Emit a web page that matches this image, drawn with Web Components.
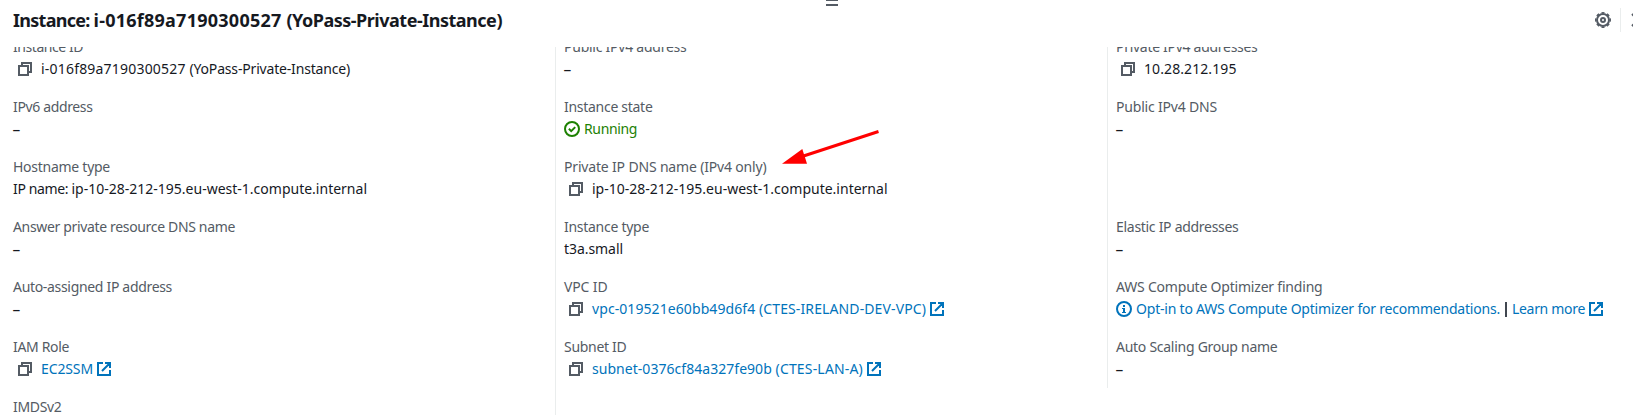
<!DOCTYPE html>
<html lang="en">
<head>
<meta charset="utf-8">
<title>Instance details</title>
<style>
html,body{margin:0;height:415px;overflow:hidden;background:#fff}
body{font:14px/22px "Noto Sans","Open Sans",sans-serif;color:#16191f}
</style>
</head>
<body>
<instance-panel></instance-panel>
<script>
const define = (name, html, ready) => customElements.define(name, class extends HTMLElement {
  connectedCallback() {
    if (this.shadowRoot) return;
    this.attachShadow({ mode: 'open' }).innerHTML = html;
    if (ready) ready(this, this.shadowRoot);
  }
});

const icons = {
  copy: '<path d="M2 5h9v9H2zM5 5V2h9v9h-3" fill="none" stroke="currentColor" stroke-width="2"/>',
  external: '<path d="M7 2H2v12h12V9M9 2h5v5M14 2L6 10" fill="none" stroke="currentColor" stroke-width="2"/>',
  ok: '<circle cx="8" cy="8" r="7" fill="none" stroke="currentColor" stroke-width="2"/><path d="M4.9 7.8l2.3 2.3 4-4" fill="none" stroke="currentColor" stroke-width="2"/>',
  info: '<circle cx="8" cy="8" r="7" fill="none" stroke="currentColor" stroke-width="2"/><path d="M7 4h2v2H7zM6 7h3v4h1v1H6v-1h1V8H6z" fill="currentColor"/>',
  gear: '<g fill="none" stroke="currentColor"><circle cx="8" cy="8" r="6" stroke-width="2"/><circle cx="8" cy="8" r="7.300" stroke-width="1.400" pathLength="80" stroke-dasharray="5.500 4.500" stroke-dashoffset="2.750"/><circle cx="8" cy="8" r="2" stroke-width="2"/></g>',
  close: '<path d="M2 2l12 12M14 2L2 14" fill="none" stroke="currentColor" stroke-width="2"/>'
};

define('ui-icon', '<style>:host{display:block;flex:none;width:16px;height:16px}svg{display:block}</style><svg width="16" height="16" viewBox="0 0 16 16"></svg>',
  (el, root) => { root.querySelector('svg').innerHTML = icons[el.getAttribute('name')]; });

/* One line of text tracked to a given measure. */
define('fit-text', '<style>:host{display:block;flex:none;white-space:pre;width:max-content}</style><span><slot></slot></span>',
  (el, root) => {
    const w = +el.getAttribute('w');
    if (!w) return;
    const span = root.querySelector('span');
    const gap = (w - span.getBoundingClientRect().width) / el.textContent.length;
    span.style.letterSpacing = gap.toFixed(4) + 'px';
  });

define('detail-item', `<style>
:host{display:block;height:60px}
.label{color:#545b64;height:22px}
.value{height:22px;display:flex;align-items:center}
.none{font-size:15.500px;margin-left:-.5px}
</style><div class="label"><slot name="label"></slot></div><div class="value"><slot><span class="none">–</span></slot></div>`);

define('copy-button', '<style>:host{display:block;flex:none;color:#545b64;padding:0 8px 0 4px;margin-top:-1px}</style><ui-icon name="copy"></ui-icon>');

define('text-link', '<style>:host{display:flex;align-items:center;color:#0073bb}ui-icon{margin:-1px 0 0 3px}</style><slot></slot><ui-icon name="external"></ui-icon>');

define('status-text', `<style>
:host{display:flex;align-items:center;gap:4px;color:#1d8102}
:host([kind=info]){color:#0073bb}
ui-icon{margin-top:-1px}
</style><ui-icon></ui-icon><slot></slot>`,
  (el, root) => {
    const icon = document.createElement('ui-icon');
    icon.setAttribute('name', el.getAttribute('kind'));
    root.querySelector('ui-icon').replaceWith(icon);
  });

define('detail-column', `<style>
:host{display:block;box-sizing:border-box;padding:0 0 0 8px;border-left:1px solid #eaeded;align-self:start;height:380px}
:host([first]){border-left:0;padding-left:13px}
:host([short]){height:352px}
</style><slot></slot>`);

define('panel-header', `<style>
:host{display:flex;box-sizing:border-box;height:47px;position:relative;justify-content:space-between;padding-left:13px;background:#fff;overflow:hidden}
.title{display:flex;font-size:18px;font-weight:700;line-height:22px;padding-top:9px}
.tools{display:flex;flex:none;width:38px;padding-top:8px;height:24px;color:#545b64}
.tools ui-icon{margin-top:4px}
.sep{flex:none;width:1px;background:#eaeded;margin:0 9px 0 9px}
.grip{position:absolute;left:826px;top:0;width:12px;height:2px;border-top:1px solid #545b64;border-bottom:2px solid #545b64;padding-top:1px}
</style><div class="title"><slot></slot></div><div class="tools"><ui-icon name="gear"></ui-icon><span class="sep"></span><ui-icon name="close"></ui-icon></div><div class="grip"></div>`);

define('arrow-note', `<style>:host{position:absolute;left:780px;top:80px;width:104px;height:40px}svg{display:block}</style>
<svg width="104" height="40"><path d="M98.500 4.500L22 29.500" stroke="#f00" stroke-width="3"/><path d="M2 36.700L22.300 22 27 36.700z" fill="#f00"/></svg>`);

define('instance-panel', `<style>
:host{display:flex;flex-direction:column;width:1633px;height:415px;overflow:hidden}
.scroll{height:368px;overflow:hidden;position:relative}
.grid{display:grid;grid-template-columns:555px 552px 526px;margin-top:-11px}
.bar{width:2px;height:15px;background:#414750;margin:0 5px 0 5px}
detail-item[blank]{visibility:hidden}
</style>
<panel-header><fit-text w="80.500">Instance: </fit-text><fit-text w="193">i-016f89a7190300527 </fit-text><fit-text w="215.500">(YoPass-Private-Instance)</fit-text></panel-header>
<div class="scroll"><div class="grid">
<detail-column first>
 <detail-item><fit-text slot="label" w="70">Instance ID</fit-text><copy-button></copy-button><fit-text w="148.500">i-016f89a7190300527 </fit-text><fit-text w="160.500">(YoPass-Private-Instance)</fit-text></detail-item>
 <detail-item><fit-text slot="label" w="79.500">IPv6 address</fit-text></detail-item>
 <detail-item><fit-text slot="label" w="97">Hostname type</fit-text><fit-text w="58.500">IP name: </fit-text><fit-text w="295.500">ip-10-28-212-195.eu-west-1.compute.internal</fit-text></detail-item>
 <detail-item><fit-text slot="label" w="222">Answer private resource DNS name</fit-text></detail-item>
 <detail-item><fit-text slot="label" w="159">Auto-assigned IP address</fit-text></detail-item>
 <detail-item><fit-text slot="label" w="56">IAM Role</fit-text><copy-button></copy-button><text-link><fit-text w="52">EC2SSM</fit-text></text-link></detail-item>
 <detail-item><fit-text slot="label" w="48.500">IMDSv2</fit-text></detail-item>
</detail-column>
<detail-column>
 <detail-item><fit-text slot="label" w="122.500">Public IPv4 address</fit-text></detail-item>
 <detail-item><fit-text slot="label" w="88.500">Instance state</fit-text><status-text kind="ok"><fit-text w="53">Running</fit-text></status-text></detail-item>
 <detail-item><fit-text slot="label" w="202.500">Private IP DNS name (IPv4 only)</fit-text><copy-button></copy-button><fit-text w="295.500">ip-10-28-212-195.eu-west-1.compute.internal</fit-text></detail-item>
 <detail-item><fit-text slot="label" w="85">Instance type</fit-text><fit-text w="59">t3a.small</fit-text></detail-item>
 <detail-item><fit-text slot="label" w="43.500">VPC ID</fit-text><copy-button></copy-button><text-link><fit-text w="167">vpc-019521e60bb49d6f4 </fit-text><fit-text w="167">(CTES-IRELAND-DEV-VPC)</fit-text></text-link></detail-item>
 <detail-item><fit-text slot="label" w="62.500">Subnet ID</fit-text><copy-button></copy-button><text-link><fit-text w="183.500">subnet-0376cf84a327fe90b </fit-text><fit-text w="87.500">(CTES-LAN-A)</fit-text></text-link></detail-item>
</detail-column>
<detail-column short>
 <detail-item><fit-text slot="label" w="141.500">Private IPv4 addresses</fit-text><copy-button></copy-button><fit-text w="92.500">10.28.212.195</fit-text></detail-item>
 <detail-item><fit-text slot="label" w="101">Public IPv4 DNS</fit-text></detail-item>
 <detail-item blank></detail-item>
 <detail-item><fit-text slot="label" w="122.500">Elastic IP addresses</fit-text></detail-item>
 <detail-item><fit-text slot="label" w="206.500">AWS Compute Optimizer finding</fit-text><status-text kind="info"><fit-text w="364">Opt-in to AWS Compute Optimizer for recommendations.</fit-text></status-text><span class="bar"></span><text-link><fit-text w="73">Learn more</fit-text></text-link></detail-item>
 <detail-item><fit-text slot="label" w="161.500">Auto Scaling Group name</fit-text></detail-item>
</detail-column>
</div><arrow-note></arrow-note></div>`);
</script>
</body>
</html>
